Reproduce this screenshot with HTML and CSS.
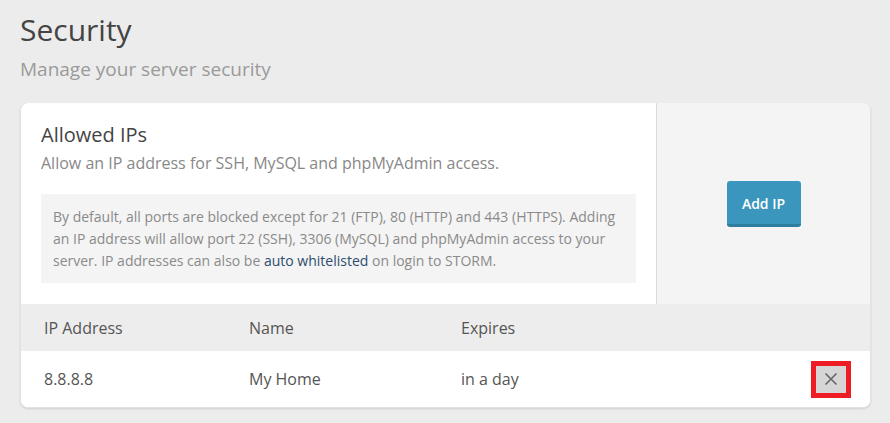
FILE: index.html
```html
<!DOCTYPE html>
<html>
<head>
<meta charset="utf-8">
<link rel="stylesheet" href="styles.css">
</head>
<body>
<div class="page">
  <h1 class="title">Security</h1>
  <p class="subtitle">Manage your server security</p>
  <div class="card">
    <div class="top">
      <div class="intro">
        <h2 class="card-title">Allowed IPs</h2>
        <p class="card-desc">Allow an IP address for SSH, MySQL and phpMyAdmin access.</p>
        <div class="info">By default, all ports are blocked except for 21 (FTP), 80 (HTTP) and 443 (HTTPS). Adding an IP address will allow port 22 (SSH), 3306 (MySQL) and phpMyAdmin access to your server. IP addresses can also be <a class="link" href="#">auto whitelisted</a> on login to STORM.</div>
      </div>
      <div class="side">
        <button class="btn">Add IP</button>
      </div>
    </div>
    <div class="row head">
      <div>IP Address</div>
      <div>Name</div>
      <div>Expires</div>
      <div></div>
    </div>
    <div class="row body">
      <div>8.8.8.8</div>
      <div>My Home</div>
      <div>in a day</div>
      <div class="act">
        <span class="del">
          <svg width="14" height="14" viewBox="0 0 14 14"><path d="M1.5 1.5 L12.5 12.5 M12.5 1.5 L1.5 12.5" stroke="#666" stroke-width="1.6" fill="none"/></svg>
        </span>
      </div>
    </div>
  </div>
</div>
</body>
</html>
```
FILE: styles.css
```css
* { box-sizing: border-box; }
html, body { margin: 0; padding: 0; }
body {
  background: #ececec;
  font-family: "Open Sans", "Liberation Sans", sans-serif;
  width: 890px;
  height: 423px;
  overflow: hidden;
}
.page { padding: 10px 19px 0 20px; }
.title {
  margin: 0;
  font-size: 30px;
  line-height: 40px;
  font-weight: 400;
  color: #444;
}
.subtitle {
  margin: 5px 0 0;
  font-size: 19px;
  line-height: 28px;
  color: #9a9a9a;
}
.card {
  margin-top: 20px;
  background: #fff;
  border-radius: 8px;
  box-shadow: 0 1px 2px rgba(0,0,0,0.12);
  border: 1px solid #e2e2e2;
  border-top: 0;
  overflow: hidden;
  width: 851px;
}
.top { display: flex; height: 201px; }
.intro { flex: 1; padding: 18px 20px 0 20px; }
.card-title {
  margin: 0;
  font-size: 20px;
  line-height: 28px;
  font-weight: 400;
  color: #444;
}
.card-desc {
  margin: 3px 0 0;
  font-size: 16px;
  line-height: 22px;
  color: #888;
}
.info {
  margin-top: 20px;
  background: #f4f4f4;
  padding: 12px 12px 11px 12px;
  font-size: 14px;
  line-height: 22px;
  color: #8a8a8a;
}
.link { color: #2c4c6e; text-decoration: none; }
.side {
  width: 214px;
  background: #f4f4f4;
  border-left: 1px solid #dcdcdc;
  display: flex;
  align-items: center;
  justify-content: center;
}
.btn {
  width: 74px;
  height: 46px;
  border: 0;
  border-bottom: 3px solid #2f7d9f;
  border-radius: 3px;
  background: #3a96bc;
  color: #fff;
  font-family: inherit;
  font-size: 14px;
  font-weight: 600;
  padding: 2px 0 0;
}
.row {
  display: grid;
  grid-template-columns: 205px 212px 1fr 40px;
  padding: 0 19px 0 23px;
  align-items: center;
  font-size: 16px;
  color: #555;
}
.head { height: 47px; background: #ededed; }
.body { height: 56px; background: #fff; }
.act { display: flex; justify-content: flex-end; }
.del {
  width: 40px;
  height: 37px;
  border: 5px solid #ee1c25;
  background: #d6d6d6;
  display: flex;
  align-items: center;
  justify-content: center;
}
.del svg { display: block; }
```
